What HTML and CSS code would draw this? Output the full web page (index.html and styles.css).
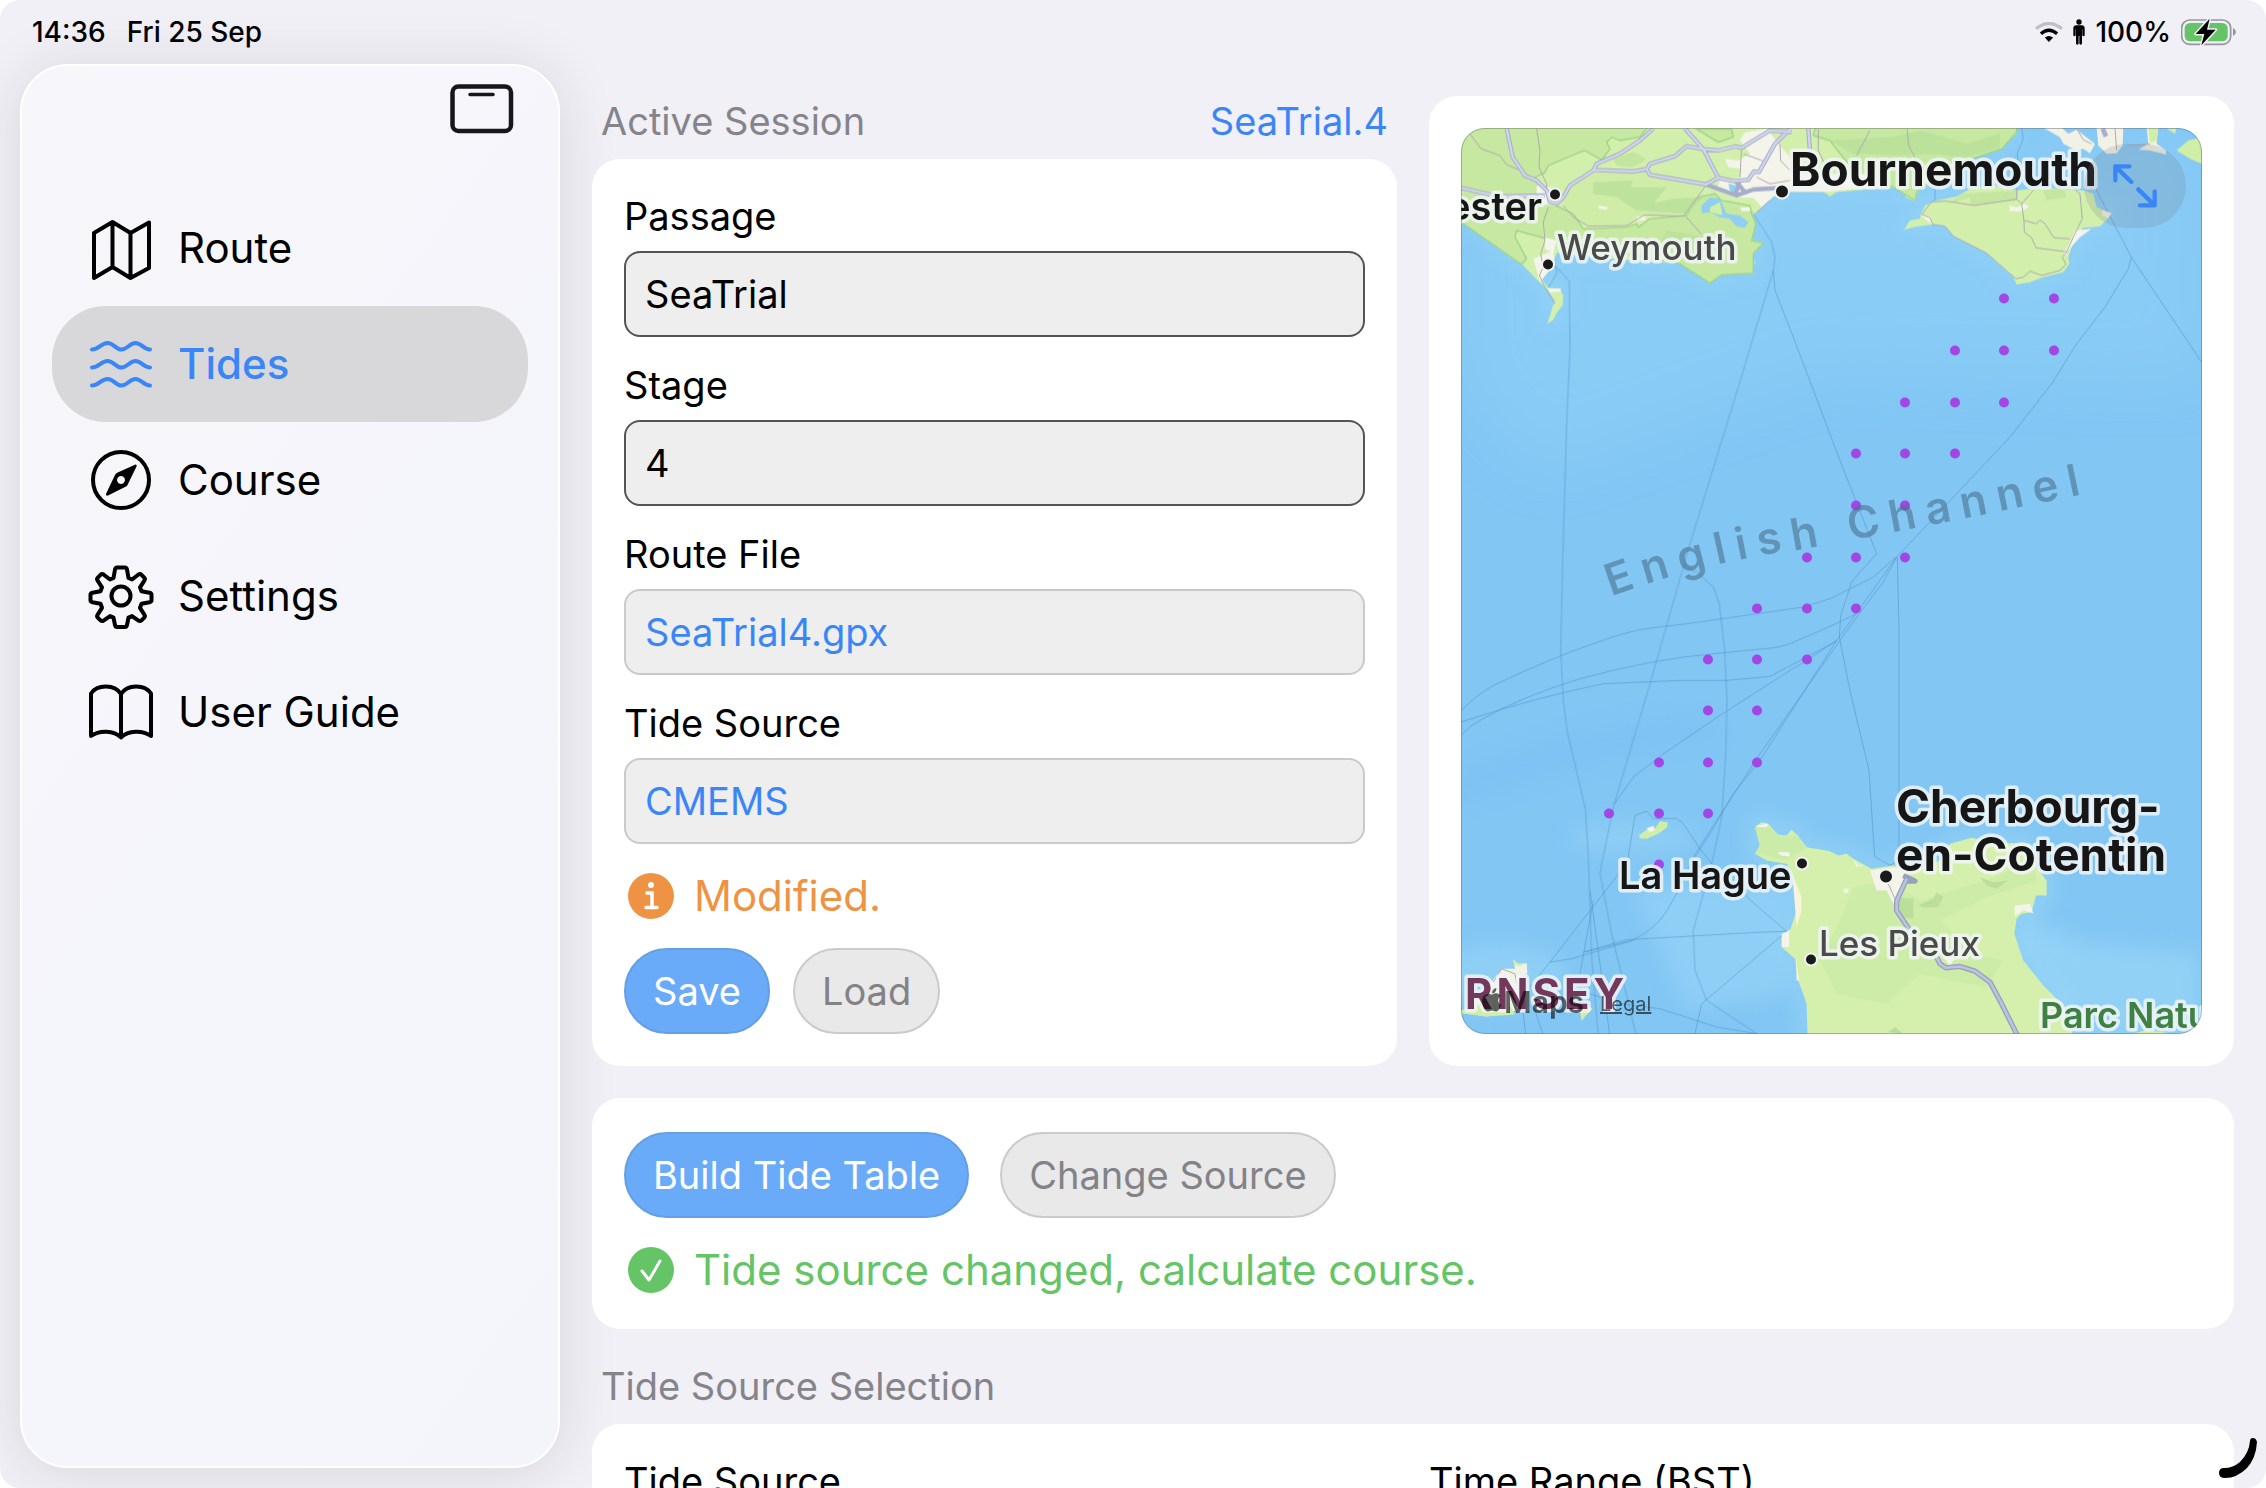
FILE: index.html
```html
<!DOCTYPE html>
<html lang="en-GB">
<head>
<meta charset="utf-8">
<meta name="viewport" content="width=device-width, initial-scale=1">
<title>Tides</title>
<link rel="stylesheet" href="styles.css">
</head>
<body>
<div class="screen">
  <header class="statusbar">
    <div class="statusbar-side"><span>14:36</span><span>Fri 25 Sep</span></div>
    <div class="statusbar-side statusbar-right">
      <svg class="wifi" width="28" height="20" viewBox="0 0 85 60" fill="none" aria-hidden="true">
        <path d="M3 20 Q42 -11 82 20" stroke="#c0bfc6" stroke-width="10"/>
        <path d="M18 35 Q42 14 67 35" stroke="#000" stroke-width="10"/>
        <path d="M30 47 Q42 37 55 47 L42 60Z" fill="#000"/>
      </svg>
      <svg width="12" height="26" viewBox="0 0 36 76" aria-hidden="true">
        <circle cx="18" cy="8" r="8"/>
        <path d="M10 18h16q9 0 9 9v20q0 4-3.500 4t-3.500-4V30h-1v42q0 4-4 4t-4-4V50h-2v22q0 4-4 4t-4-4V30H8v17q0 4-3.500 4T1 47V27q0-9 9-9z"/>
      </svg>
      <span class="percent">100%</span>
      <svg width="55" height="28" viewBox="0 0 165 84" aria-hidden="true">
        <rect x="2" y="6" width="147" height="73" rx="24" fill="none" stroke="#97969c" stroke-width="5"/>
        <rect x="11" y="15" width="129" height="55" rx="16" fill="#64c466"/>
        <path d="M156 30q9 4 9 12t-9 12z" fill="#97969c"/>
        <path d="M86 2 L44 48 H70 L61 82 L104 35 H78Z" stroke="#f1f0f6" stroke-width="9" stroke-linejoin="round"/>
        <path d="M86 2 L44 48 H70 L61 82 L104 35 H78Z"/>
      </svg>
    </div>
  </header>

  <div class="layout">
    <aside class="sidebar">
      <div class="sidebar-top">
        <button class="toggle" type="button" aria-label="Hide sidebar">
          <svg width="64" height="50" viewBox="0 0 64 50" fill="none" stroke="#17171b" aria-hidden="true">
            <rect x="2.500" y="2.500" width="58.500" height="44.500" rx="6" stroke-width="4.500"/>
            <path d="M20 10.500h23" stroke-width="3.500" stroke-linecap="round"/>
          </svg>
        </button>
      </div>
      <nav class="menu">
        <a class="menu-item" href="#route">
          <svg class="icon" viewBox="0 0 68 68" aria-hidden="true"><path d="M7 19 L25.500 8 L43.500 19 L62 8.500 V54 L43.500 64 L25.500 53 L7 64Z M25.500 8V53M43.500 19V64"/></svg>
          Route
        </a>
        <a class="menu-item active" href="#tides" aria-current="page">
          <svg class="icon" viewBox="0 0 68 68" aria-hidden="true">
            <path d="M5 19.500c7 0 9-6.500 15.500-6.500s8 6.500 14 6.500 8-6.500 14-6.500 8 6.500 14.500 6.500"/>
            <path d="M5 37.500c7 0 9-6.500 15.500-6.500s8 6.500 14 6.500 8-6.500 14-6.500 8 6.500 14.500 6.500"/>
            <path d="M5 55.500c7 0 9-6.500 15.500-6.500s8 6.500 14 6.500 8-6.500 14-6.500 8 6.500 14.500 6.500"/>
          </svg>
          Tides
        </a>
        <a class="menu-item" href="#course">
          <svg class="icon" viewBox="0 0 68 68" aria-hidden="true">
            <circle cx="34" cy="34" r="28"/>
            <path class="solid" fill-rule="evenodd" d="M48.500 18.500c1 0 1.500 1 1 2L41 38q-.5 1.500-2 2.500L21 49.500c-1.500.500-2.500-.5-1.800-2L28 29q.8-1.500 2.200-2.200ZM34 30a4 4 0 1 0 .01 0Z"/>
          </svg>
          Course
        </a>
        <a class="menu-item" href="#settings">
          <svg class="icon" viewBox="0 0 68 68" aria-hidden="true">
            <circle cx="34" cy="34" r="9.500"/>
            <path d="M30 5.500h8q1.500 0 2 2l1.500 8.500 3.500 1.500 6.500-5q1.500-1 3 .3l2.500 2.500q1.500 1.500.5 3l-4.500 7 1.500 4 8 1.500q2 .500 2 2v5.500q0 1.500-2 2l-8 1.500-1.500 4 4.500 7q1 1.500-.5 3l-2.500 2.500q-1.500 1.300-3 .3l-6.500-4.500-3.500 1.500-1.500 7.500q-.5 2-2 2h-8q-1.500 0-2-2l-1.500-7.500-3.500-1.500-6.500 4.500q-1.500 1-3-.3l-2.500-2.500q-1.500-1.500-.5-3l4.500-7-1.500-4-8-1.500q-2-.5-2-2v-5.500q0-1.500 2-2l8-1.500 1.500-4-4.500-7q-1-1.500.5-3l2.500-2.500q1.500-1.300 3-.3l6.500 5 3.500-1.500 1.500-8.500q.500-2 2-2z"/>
          </svg>
          Settings
        </a>
        <a class="menu-item" href="#guide">
          <svg class="icon" viewBox="0 0 68 68" aria-hidden="true"><path d="M34 16C28 6 10 6 4 15.500V58c8-6 23-6 30 1.500 7-7.500 22-7.500 30-1.500V15.500C58 6 40 6 34 16ZV59"/></svg>
          User Guide
        </a>
      </nav>
    </aside>

    <main class="main">
      <div class="columns">
        <section class="session">
          <div class="section-head">
            <h2 class="section-title">Active Session</h2>
            <a class="link" href="#session">SeaTrial.4</a>
          </div>
          <form class="card form">
            <div class="field">
              <label for="passage">Passage</label>
              <input class="box" id="passage" type="text" value="SeaTrial">
            </div>
            <div class="field">
              <label for="stage">Stage</label>
              <input class="box" id="stage" type="text" value="4">
            </div>
            <div class="field">
              <label for="routefile">Route File</label>
              <button class="box picker" id="routefile" type="button">SeaTrial4.gpx</button>
            </div>
            <div class="field">
              <label for="tidesource">Tide Source</label>
              <button class="box picker" id="tidesource" type="button">CMEMS</button>
            </div>
            <p class="status warn">
              <svg width="46" height="46" viewBox="0 0 46 46" aria-hidden="true">
                <circle cx="23" cy="23" r="23" fill="currentColor"/>
                <circle cx="23" cy="12" r="3" fill="#fff"/>
                <path d="M19 20h5v14M18 34.500h11" fill="none" stroke="#fff" stroke-width="3.500" stroke-linecap="round"/>
              </svg>
              Modified.
            </p>
            <div class="actions">
              <button class="pill primary" type="button">Save</button>
              <button class="pill" type="button">Load</button>
            </div>
          </form>
        </section>

        <section class="card map-card" aria-label="Map">
          <div class="map">
            <svg class="map-art" viewBox="0 0 741 907" preserveAspectRatio="xMidYMid slice" aria-hidden="true">
              <defs>
                <filter id="soft" x="-20%" y="-20%" width="140%" height="140%"><feGaussianBlur stdDeviation="30"/></filter>
                <path id="channel" d="M150 469 Q245 434 350 420 Q500 393 700 350"/>
                <path id="england" d="M100 90V388L123 397 160 415 210 455 270 500 310 525 345 562 380 595 404 630 382 700 400 688 412 664 428 645 429 615 420 595 384 592 360 558 395 520 412 485 520 500 640 510 780 520 830 545 862 554 870 580 905 553 1000 550 995 520 1005 520 1000 495 995 480 1030 455 1000 450 995 430 1008 400 996 360 1005 372 1025 350 1060 318 1100 304 1210 304 1230 318 1250 305 1410 290 1455 300 1458 320 1485 332 1492 310 1500 290 1600 270 1660 200 1700 185 1745 175 1760 155 1790 130V90Z"/>
                <path id="wight" d="M222 418L240 390 270 385 272 372 285 345 320 330 380 318 430 290 500 285 560 300 640 290 700 295 760 300 790 310 800 350 845 368 835 382 810 408 760 412 735 440 722 480 715 500 718 520 700 545 640 560 600 575 560 582 550 560 470 488 370 437 345 407 310 402 260 408Z"/>
                <path id="cotentin" d="M1005 800L1025 785 1045 790 1073 822 1100 825 1115 808 1133 825 1160 860 1230 872 1255 885 1280 880 1300 895 1355 925 1420 915 1480 930 1560 900 1590 850 1655 832 1710 845 1830 850 1850 920 1880 960V1005H1848L1835 1055 1805 1060 1790 1075 1783 1120 1810 1200 1870 1275 1920 1325 1965 1440H1163L1160 1330 1135 1260 1125 1195 1085 1160 1088 1125 1112 1105 1130 1050V990L1117 940 1100 910 1040 900 1005 880 1020 855Z"/>
              </defs>
              <rect width="741" height="907" fill="#82c6f4"/>

              <!-- shallow water -->
              <g fill="#93d4f8" filter="url(#soft)" opacity=".75">
                <path d="M80 340L360 240 741 250V0H0V250Z" opacity=".6"/>
              </g>
              <g fill="none" stroke="#9ddaf6" stroke-width="26" opacity=".55" stroke-linejoin="round">
                <g transform="translate(-41 -37) scale(.3333)"><use href="#england" filter="url(#soft)"/></g>
                <g transform="translate(369 -37) scale(.3333)"><use href="#wight" filter="url(#soft)"/></g>
                <g transform="translate(-41 433) scale(.3333)"><use href="#cotentin" filter="url(#soft)" stroke-width="50"/></g>
              </g>
              <g transform="translate(-41 433) scale(.3333)" filter="url(#soft)">
                <ellipse cx="640" cy="830" rx="190" ry="50" fill="#98d6f6" opacity=".5"/>
                <ellipse cx="240" cy="1250" rx="200" ry="100" fill="#98d6f6" opacity=".6"/>
                <path d="M1800 1060L2000 1150 2340 1180V1440H1960L1780 1160Z" fill="#98d6f6" opacity=".7"/>
                <path d="M640 980L1100 960 1110 1300 800 1350Z" fill="#98d6f6" opacity=".6"/>
                <path d="M100 650Q350 530 700 480Q900 460 900 520Q400 620 100 730Z" fill="#70b9f1" opacity=".3"/>
              </g>

              <!-- ferry routes -->
              <g class="ferry">
                <g transform="translate(-41 -37) scale(.3333)">
                  <path d="M385 592L412 545 405 525 448 572 450 770 440 1000 428 1410 422 1680 430 1830 442 1925 496 2155 505 2300 515 2600 535 2840"/>
                  <path d="M1003 375L1055 455 1065 500 1060 540 955 890 810 1360 690 1780 580 2150 545 2320 540 2350 575 2530 650 2840"/>
                  <path d="M1060 540L1065 600 1120 740 1260 1110 1370 1390 1320 1445 1295 1475 1262 1575 1258 1640 1290 1800 1347 2040 1364 2298 1410 2325"/>
                  <path d="M790 1425L830 1445 880 1490 898 1540 914 1680 921 1830 917 2000 905 2180 880 2300 820 2520 825 2640 860 2730 1010 2830"/>
                  <path d="M2345 815L2134 500 2030 300 2025 230M2134 500L2125 535 2055 650 1970 760 1895 880 1770 1040 1430 1400 1250 1650 1170 1775 1020 2010 940 2110 870 2230 825 2300"/>
                  <path d="M1430 1400L1390 1475 1310 1580 1260 1650 1020 1990 890 2190 820 2300 770 2410 735 2470Q700 2520 635 2550L495 2585"/>
                  <path d="M1432 1400L1437 1620V2310L1410 2325M1428 1400L1360 1460 1230 1525 1150 1550 800 1600 690 1613Q620 1622 520 1660Q400 1700 220 1785Q160 1820 123 1862"/>
                  <path d="M1310 1570L1230 1608 1110 1660Q1080 1670 1060 1672L880 1690Q700 1705 480 1765Q300 1820 180 1890Q150 1905 123 1935"/>
                  <path d="M1250 1652L1050 1758 920 1770H780L550 1780Q350 1820 123 1895M1250 1650L1160 1710 1110 1740 900 1875 730 1990 640 2060 583 2140"/>
                  <path d="M625 2300L645 2175 680 2162 700 2185 770 2184 790 2200 840 2275 875 2320 1020 2455 1100 2523 845 2740 825 2830M1100 2523L1010 2526 620 2548 490 2585M625 2300L600 2345 390 2615 330 2690M390 2615L455 2605 640 2550M520 2430L480 2650M510 2400L570 2840"/>
                  <path d="M300 2690L318 2840M345 2760L372 2840M510 2710L600 2740 720 2755 890 2810 1010 2830"/>
                  <path d="M1805 110L1810 145 1792 190 1798 260M1545 330V290"/>
                </g>
              </g>

              <!-- south coast of England -->
              <g transform="translate(-41 -37) scale(.3333)">
                <use href="#england" fill="#d2efab"/>
                <g fill="#c6e8a1" stroke="#9fd388" stroke-width="4">
                  <path d="M100 100H690L660 140 600 150 575 140 560 155 570 175 545 208 493 180 385 225 375 245 343 262 380 300 375 330 460 370 490 415 620 410 650 400 655 410 690 385 800 375 835 320 885 310 905 330 990 345 995 370 1008 400 995 450 1030 458 1000 490 1000 548 905 553 870 578 780 520 400 450 290 420 285 440 320 505 305 522 123 395Z"/>
                  <path d="M830 116L895 155 940 140 935 116Z"/>
                  <path d="M1185 116L1180 135 1230 150 1300 240 1420 290 1485 330 1492 300 1640 210 1745 175 1790 125V100H1200Z"/>
                </g>
                <path d="M450 285L520 240 680 236 690 253 858 282 790 372 675 373 620 400 505 402 460 370 430 335Z" fill="#d0eda8"/>
                <g fill="#b7de98">
                  <path d="M520 275L640 270 630 290 740 290 700 340 760 325 850 320 800 370 650 360 590 320 520 310Z" opacity=".8"/>
                  <path d="M580 205L640 185 680 205 640 230 590 225ZM740 420L850 440 830 480 720 460Z" opacity=".6"/>
                  <path d="M1230 150L1420 140 1500 120 1640 160 1740 130 1740 170 1640 200 1540 190 1440 195 1300 190Z" opacity=".7"/>
                </g>
                <g fill="#f4f4ea">
                  <path d="M350 285L385 290 420 300 415 345 350 340ZM340 505L400 480 405 520 360 575ZM375 440L410 450 400 490 375 475ZM385 594H422V604L390 606Z"/>
                  <path d="M915 205L955 210 990 190 960 150 975 125 1040 115 1080 165 1110 200 1115 300 1060 318 1025 350 1000 322 945 320 890 300 900 270 960 262 965 235 925 230Z"/>
                  <path d="M1110 250H1330L1410 285 1220 304H1110ZM535 345L565 350 560 358 535 354ZM650 378H676V390H650ZM960 350H990V362H965Z"/>
                </g>
                <path d="M845 345L870 320 900 325 920 370 960 375 985 395 975 412 950 408 930 385 900 380 870 365 845 368ZM925 280L948 285 945 310 930 300Z" fill="#8fd0f2"/>
                <path d="M870 350L900 335 908 375 870 365Z" fill="#cfeea8"/>
                <g class="lane">
                  <path d="M150 130L183 175 240 195 260 223 315 245M350 115L360 180 357 230 380 280V300M385 350L370 395 375 450 362 490 370 530 358 555 375 590 405 640"/>
                  <path d="M430 345L460 380 505 407 620 405 675 373 790 377 858 285M795 375L845 432M1000 375L1050 330M965 170L960 260M1080 160L1082 210 1110 240M1195 116V180L1225 245M1350 120L1310 195M1462 116L1466 165 1485 200M1010 260L1050 280 1110 270M970 190L1040 215"/>
                </g>
                <g class="road">
                  <path d="M260 114L278 200 315 255 350 270 380 300 390 335 412 338 430 320 450 285 520 240 530 220 600 190 660 150 700 114"/>
                  <path d="M123 292L235 318 375 315M520 238L640 243 680 236 690 220 765 197 800 167 850 176 895 180 945 168 965 172 1050 120 1115 125M680 236L690 253 858 282 895 262 850 176 795 114M895 262L940 272 985 268 1002 243 1017 245 1065 160 1110 116M1165 114L1170 180M858 282L950 315 1000 297 1085 292M945 270L975 305M958 275L945 318"/>
                </g>
                <g class="road-core">
                  <path d="M260 114L278 200 315 255 350 270 380 300 390 335 412 338 430 320 450 285 520 240 530 220 600 190 660 150 700 114M123 292L235 318 375 315M520 238L640 243 680 236 690 220 765 197 800 167 850 176 895 180 945 168 965 172 1050 120 1115 125M680 236L690 253 858 282 895 262 850 176 795 114M895 262L940 272 985 268 1002 243 1017 245 1065 160 1110 116M1165 114L1170 180"/>
                </g>
              </g>

              <!-- Isle of Wight and the Solent -->
              <g transform="translate(369 -37) scale(.3333)">
                <use href="#wight" fill="#d2efab"/>
                <path d="M345 345L420 320 420 345 560 330 565 300 400 310ZM640 300L700 290 710 320 650 330Z" fill="#bfe29d" opacity=".7"/>
                <path d="M640 112H695L715 130 740 118 795 160 780 188 760 175 740 180 700 160 690 140ZM800 112L880 112 878 165 860 188 830 190 805 165ZM925 178L955 160 950 112 985 112 980 160 1008 180V192L960 180Z" fill="#f2f1e6"/>
                <path d="M538 345L560 350 585 340 598 348 575 362H540ZM735 420L785 415 750 440 715 480 710 495 700 490 725 445ZM815 360L845 368 835 382 818 375ZM272 372L300 378 308 402 290 390Z" fill="#f4f4ea"/>
                <path d="M1040 180L1075 150 1115 140V220L1080 205ZM1010 114H1040L1035 130ZM955 112L985 112 980 150 960 158Z" fill="#cfeea8"/>
                <path d="M818 114L828 138" stroke="#a9aed0" stroke-width="14"/>
                <g class="lane">
                  <path d="M275 372L305 334 350 332 433 345 560 326 575 340 582 390 583 425 605 442 618 472 710 484 730 440 757 385 750 310 735 297M575 340L612 298M560 326V290M275 372L300 382 308 402 345 407 370 437 470 488 558 565 580 560 600 542 635 555 690 540 708 522 697 500 712 484M583 390L620 400 630 388 645 400 672 442 720 445M740 114L760 148 785 160M855 114L860 180M890 165L960 160"/>
                </g>
              </g>

              <!-- Cotentin, Alderney and Guernsey -->
              <g transform="translate(-41 433) scale(.3333)">
                <use href="#cotentin" fill="#d4f0ac"/>
                <path d="M1300 980L1400 960 1500 1020 1700 960 1840 900 1850 960 1700 1010 1560 1080 1660 1180 1750 1200 1700 1280 1500 1240 1400 1330 1250 1300 1200 1200 1260 1080Z" fill="#c9eba6" opacity=".8"/>
                <path d="M1005 800L1045 795 1073 825 1133 825 1160 860 1100 900 1010 880 1020 850Z" fill="#cbeca8"/>
                <path d="M1495 1035L1540 1015 1550 995 1570 1010 1555 1040 1510 1040ZM1680 950L1720 965 1765 960 1730 985 1700 975ZM1430 1010L1480 1015 1480 1075 1445 1070ZM1405 1415L1425 1400 1450 1420Z" fill="#bbdf9b"/>
                <path d="M1350 930L1420 920 1460 930 1455 960 1430 1000 1420 1030 1400 990 1370 990ZM1783 1035L1830 1030 1840 1058 1810 1050 1785 1068ZM1072 875L1108 875 1110 888 1085 886ZM1010 795L1045 790 1040 800 1015 800ZM1085 1120L1108 1110V1160L1085 1158ZM1300 895L1310 920 1325 910 1320 920ZM1570 1190L1605 1195 1590 1215ZM1270 985H1285V997H1272Z" fill="#f4f4ea"/>
                <path d="M1117 940L1145 1010V1050L1130 1100ZM1128 1195L1138 1260H1130Z" fill="#f8f3da"/>
                <path d="M657 825L680 808 705 805 720 782 743 785 742 800 715 820 680 835 660 833Z" fill="#cfeea8"/>
                <path d="M680 803L700 796 705 808 690 815Z" fill="#f4f4ea"/>
                <path d="M123 1350L150 1345 170 1300 215 1265 245 1225 285 1225 280 1198 295 1210 320 1208 322 1235 300 1300 290 1350 200 1368 123 1358Z" fill="#f2f2e6"/>
                <path d="M123 1350L180 1330 270 1335 285 1362 200 1368 123 1358ZM280 1198L295 1210 320 1208 300 1216 283 1214ZM485 1382L480 1355 510 1340 518 1345 495 1368ZM2140 1420L2180 1408 2260 1420Z" fill="#cfeea8"/>
                <g class="lane"><path d="M220 1265L245 1225 285 1240 290 1270M1405 970L1425 1015"/></g>
                <g class="motorway">
                  <path d="M1460 955L1430 1022V1050L1470 1110M1550 1190L1560 1210 1578 1222 1620 1218 1665 1232 1710 1265 1740 1320 1795 1430M1450 945L1485 962H1455"/>
                </g>
                <g class="motorway-core">
                  <path d="M1460 955L1430 1022V1050L1470 1110M1550 1190L1560 1210 1578 1222 1620 1218 1665 1232 1710 1265 1740 1320 1795 1430"/>
                </g>
              </g>

              <!-- tide stations -->
              <g fill="#a346e6">
                <circle cx="543" cy="171" r="5"/><circle cx="593" cy="171" r="5"/>
                <circle cx="494" cy="223" r="5"/><circle cx="543" cy="223" r="5"/><circle cx="593" cy="223" r="5"/>
                <circle cx="444" cy="275" r="5"/><circle cx="494" cy="275" r="5"/><circle cx="543" cy="275" r="5"/>
                <circle cx="395" cy="326" r="5"/><circle cx="444" cy="326" r="5"/><circle cx="494" cy="326" r="5"/>
                <circle cx="395" cy="378" r="5"/><circle cx="444" cy="378" r="5"/>
                <circle cx="346" cy="430" r="5"/><circle cx="395" cy="430" r="5"/><circle cx="444" cy="430" r="5"/>
                <circle cx="296" cy="481" r="5"/><circle cx="346" cy="481" r="5"/><circle cx="395" cy="481" r="5"/>
                <circle cx="247" cy="532" r="5"/><circle cx="296" cy="532" r="5"/><circle cx="346" cy="532" r="5"/>
                <circle cx="247" cy="583" r="5"/><circle cx="296" cy="583" r="5"/>
                <circle cx="198" cy="635" r="5"/><circle cx="247" cy="635" r="5"/><circle cx="296" cy="635" r="5"/>
                <circle cx="148" cy="686" r="5"/><circle cx="198" cy="686" r="5"/><circle cx="247" cy="686" r="5"/>
                <circle cx="198" cy="737" r="5"/>
              </g>

              <!-- places -->
              <g fill="#1a1a1a" stroke="#f1f3f2" stroke-width="2">
                <circle cx="94" cy="67" r="6"/><circle cx="87" cy="137" r="6"/><circle cx="321" cy="64" r="7"/>
                <circle cx="341" cy="736" r="6"/><circle cx="350" cy="832" r="6"/><circle cx="425" cy="749" r="7"/>
              </g>
              <text class="sea-label"><textPath href="#channel">English Channel</textPath></text>
              <text class="place city" x="329" y="58">Bournemouth</text>
              <text class="place town" x="81" y="92" text-anchor="end">ester</text>
              <text class="place village" x="96" y="132">Weymouth</text>
              <text class="place city" x="435" y="695">Cherbourg-<tspan x="435" y="743">en-Cotentin</tspan></text>
              <text class="place town" x="158" y="761">La Hague</text>
              <text class="place village" x="358" y="828">Les Pieux</text>
              <text class="place island" x="4" y="881">RNSEY</text>
              <text class="place park" x="579" y="900">Parc Natu</text>
              <g class="brand">
                <path transform="translate(-41 433) scale(.3333)" d="M216 1303c6-4 14-7 22-1 4 3 3 5 1 7-7 6-6 20 5 25-3 10-9 18-15 19-5 0-8-3-13-3s-8 3-13 3c-10-2-17-19-17-32 0-16 18-25 30-18zM216 1299c0-9 6-15 13-16 1 9-5 16-13 16z"/>
                <text x="43" y="885">Maps</text>
              </g>
            </svg>
            <a class="legal" href="#legal">Legal</a>
            <button class="expand" type="button" aria-label="Expand map">
              <svg width="44" height="44" viewBox="0 0 132 132" fill="none" stroke="#3b86f7" stroke-width="13" stroke-linecap="round" stroke-linejoin="round" aria-hidden="true">
                <path d="M7 49V7H49M7 7L55 54M125 82V124H81M125 124L76 76"/>
              </svg>
            </button>
          </div>
        </section>
      </div>

      <section class="card build">
        <div class="actions wide">
          <button class="pill primary" type="button">Build Tide Table</button>
          <button class="pill" type="button">Change Source</button>
        </div>
        <p class="status ok">
          <svg width="46" height="46" viewBox="0 0 46 46" aria-hidden="true">
            <circle cx="23" cy="23" r="23" fill="currentColor"/>
            <path d="M14 24l7 9L32 14" fill="none" stroke="#fff" stroke-width="3" stroke-linecap="round" stroke-linejoin="round"/>
          </svg>
          Tide source changed, calculate course.
        </p>
      </section>

      <section class="selection">
        <div class="section-head">
          <h2 class="section-title">Tide Source Selection</h2>
        </div>
        <div class="card selection-grid">
          <div>Tide Source</div>
          <div>Time Range (BST)</div>
        </div>
      </section>
    </main>
  </div>
  <svg class="corner" width="42" height="42" viewBox="0 0 42 42" aria-hidden="true"><path d="M33 3q0-3 3-3t4 4Q39 20 30 30 20 40 8 40q-6 0-6-5t5-5q9 0 16-6 9-9 10-21z"/></svg>
</div>
</body>
</html>
```

FILE: styles.css
```css
* { box-sizing: border-box; }

body {
  margin: 0;
  background: #fff;
  color: #000;
  font-family: Inter, "Liberation Sans", sans-serif;
  font-size: 38px;
  line-height: 50px;
}

h2, p { margin: 0; font-weight: 400; font-size: inherit; }
a { color: inherit; text-decoration: none; }
button, input { font: inherit; color: inherit; margin: 0; }
svg { display: block; flex: none; }

.screen {
  position: relative;
  display: flex;
  flex-direction: column;
  height: 100vh;
  overflow: hidden;
  border-radius: 20px;
  background: #f1f0f6;
}

.statusbar {
  display: flex;
  justify-content: space-between;
  align-items: center;
  height: 64px;
  padding: 0 30px 0 32px;
  font-size: 28px;
  line-height: 32px;
  font-weight: 500;
}
.statusbar-side { display: flex; align-items: center; gap: 21px; }
.statusbar-right { gap: 10px; }

.layout { display: flex; flex: 1; min-height: 0; }

.sidebar {
  flex: none;
  width: 540px;
  margin: 0 0 20px 20px;
  padding: 16px 30px;
  border: 2px solid #fff;
  border-radius: 48px;
  background: linear-gradient(125deg, #f7f7fa 0%, #f5f5fb 40%, #f4f6fb 60%, #f4f5fa 100%);
  box-shadow: 0 4px 60px rgba(30, 30, 50, 0.12);
}
.sidebar-top { display: flex; justify-content: flex-end; height: 108px; padding: 2px 14px 0 0; }
.toggle { height: 50px; padding: 0; border: 0; background: none; }

.menu { display: flex; flex-direction: column; }
.menu-item {
  display: flex;
  align-items: center;
  gap: 23px;
  height: 116px;
  padding: 0 35px;
  border-radius: 54px;
  font-size: 42px;
}
.menu-item.active { background: #d8d8da; color: #3b86f7; font-weight: 500; }
.icon {
  width: 68px;
  height: 68px;
  fill: none;
  stroke: currentColor;
  stroke-width: 4;
  stroke-linecap: round;
  stroke-linejoin: round;
}
.icon .solid { fill: currentColor; stroke: none; }

.main {
  flex: 1;
  min-width: 0;
  padding: 32px 32px 0;
  display: flex;
  flex-direction: column;
  gap: 32px;
  overflow: hidden;
}
.main > * { flex: none; }

.columns { display: grid; grid-template-columns: 1fr 1fr; gap: 32px; }

.section-head {
  display: flex;
  justify-content: space-between;
  padding: 0 9px 13px;
}
.section-title { color: #85848a; }
.link { color: #3b86f7; }

.card { border-radius: 28px; background: #fff; padding: 32px; }

.form { display: flex; flex-direction: column; gap: 23px; }
.field { display: flex; flex-direction: column; gap: 10px; }

.box {
  width: 100%;
  height: 86px;
  padding: 0 19px;
  border: 2px solid #545456;
  border-radius: 16px;
  background: #eee;
  text-align: left;
}
.box.picker { border-color: #cacaca; color: #3b86f7; }

.status { display: flex; align-items: center; gap: 20px; padding-left: 4px; font-size: 42px; line-height: 58px; }
.warn { color: #ee9344; }
.ok { color: #64c466; }

.actions { display: flex; gap: 23px; }
.actions.wide { gap: 31px; }
.pill {
  height: 86px;
  padding: 0 27px;
  border: 2px solid #cbcbcb;
  border-radius: 43px;
  background: #e9e9e9;
  color: #838287;
}
.pill.primary { background: #6aabf9; border-color: #639fe5; color: #fff; }

.map-card { display: flex; }
.map {
  position: relative;
  flex: 1;
  overflow: hidden;
  border-radius: 24px;
}
.map::after {
  content: "";
  position: absolute;
  inset: 0;
  border: 1px solid rgba(90, 90, 90, 0.4);
  border-radius: 24px;
  pointer-events: none;
}
.map-art { position: absolute; inset: 0; width: 100%; height: 100%; }

.ferry path { fill: none; stroke: #4f8fc0; stroke-width: 3; opacity: 0.5; }
.lane path { fill: none; stroke: #b1aab2; stroke-width: 3; }
.road path { fill: none; stroke: #a7aeca; stroke-width: 13; stroke-linejoin: round; }
.road-core path { fill: none; stroke: #d0d5ec; stroke-width: 7; stroke-linejoin: round; }
.motorway path { fill: none; stroke: #98a0c0; stroke-width: 16; stroke-linejoin: round; }
.motorway-core path { fill: none; stroke: #bcc3dc; stroke-width: 8; stroke-linejoin: round; }

.place { paint-order: stroke; stroke: rgba(240, 244, 246, 0.85); stroke-width: 7px; stroke-linejoin: round; }
.city { font-size: 46px; font-weight: 700; fill: #161616; letter-spacing: 0; }
.town { font-size: 38px; font-weight: 600; fill: #161616; }
.village { font-size: 35px; font-weight: 500; fill: #4a4a4a; }
.island { font-size: 42px; font-weight: 700; fill: #73385c; letter-spacing: 4px; }
.park { font-size: 36px; font-weight: 600; fill: #3f8043; }
.sea-label { font-size: 44px; font-weight: 600; fill: #4b718d; fill-opacity: 0.6; letter-spacing: 10px; }
.brand { fill: #000; fill-opacity: 0.6; font-size: 30px; font-weight: 600; }

.legal {
  position: absolute;
  left: 139px;
  bottom: 18px;
  color: rgba(0, 0, 0, 0.6);
  font-size: 20px;
  line-height: 24px;
  text-decoration: underline;
}

.expand {
  position: absolute;
  top: 16px;
  right: 16px;
  display: grid;
  place-items: center;
  width: 102px;
  height: 84px;
  padding: 0;
  border: 0;
  border-radius: 42px;
  background: rgba(110, 110, 120, 0.18);
}

.build { display: flex; flex-direction: column; gap: 23px; padding: 34px 32px 30px; }
.selection-grid { display: grid; grid-template-columns: 1fr 1fr; gap: 32px; }

.corner { position: absolute; right: 7px; bottom: 8px; }
```
